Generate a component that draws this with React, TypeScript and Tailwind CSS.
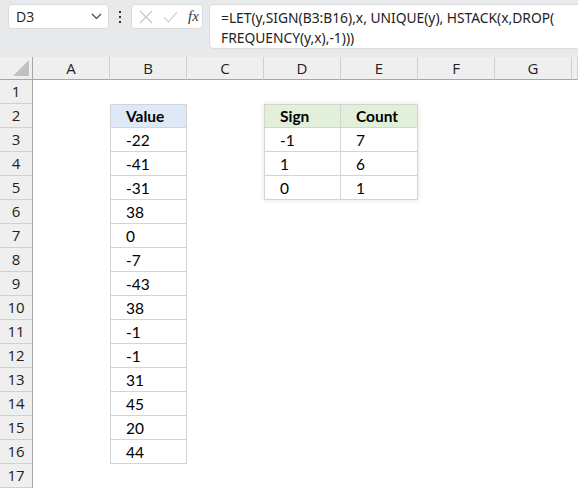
import React from "react";

const COLS = ["A", "B", "C", "D", "E", "F", "G", ""];
const VALUES = ["-22", "-41", "-31", "38", "0", "-7", "-43", "38", "-1", "-1", "31", "45", "20", "44"];
const SUMMARY = [
  ["-1", "7"],
  ["1", "6"],
  ["0", "1"],
];

function cellContent(row: number, col: number) {
  // col: 0 = A ... 6 = G
  if (col === 1 && row === 2) return { text: "Value", cls: "bg-[#dde9f5] font-bold border-t border-l border-r border-b border-[#d4d4d4]" };
  if (col === 1 && row >= 3 && row <= 16)
    return { text: VALUES[row - 3], cls: "border-l border-r border-b border-[#d4d4d4]" };
  if (col === 3 && row === 2) return { text: "Sign", cls: "bg-[#e2efda] font-bold border-t border-l border-r border-b border-[#d4d4d4]" };
  if (col === 4 && row === 2) return { text: "Count", cls: "bg-[#e2efda] font-bold border-t border-r border-b border-[#d4d4d4]" };
  if (col === 3 && row >= 3 && row <= 5)
    return { text: SUMMARY[row - 3][0], cls: "border-l border-r border-b border-[#d4d4d4]" };
  if (col === 4 && row >= 3 && row <= 5)
    return { text: SUMMARY[row - 3][1], cls: "border-r border-b border-[#d4d4d4]" };
  return { text: "", cls: "" };
}

export default function App() {
  const rows = Array.from({ length: 17 }, (_, i) => i + 1);

  return (
    <div className="w-[578px] h-[488px] overflow-hidden bg-white relative" style={{ fontFamily: "Lato, 'Liberation Sans', sans-serif" }}>
      {/* Toolbar */}
      <div className="h-[57px] bg-[#e8e9eb] flex items-start pt-[4px] pl-[8px] gap-0">
        <div className="w-[101px] h-[25px] bg-white rounded-[4px] border border-[#dcdcdc] flex items-center justify-between pl-[7px] pr-[6px]">
          <span className="text-[14px] text-[#222]" style={{ fontFamily: "'Open Sans', sans-serif" }}>D3</span>
          <svg width="11" height="7" viewBox="0 0 11 7"><path d="M1 1l4.5 4.5L10 1" fill="none" stroke="#444" strokeWidth="1.2" /></svg>
        </div>
        <div className="w-[22px] h-[25px] flex flex-col items-center justify-center gap-[3px]">
          <span className="w-[2px] h-[2px] bg-[#333]" />
          <span className="w-[2px] h-[2px] bg-[#333]" />
          <span className="w-[2px] h-[2px] bg-[#333]" />
        </div>
        <div className="w-[72px] h-[25px] bg-white rounded-[4px] border border-[#dcdcdc] flex items-center pl-[7px] gap-[10px]">
          <svg width="14" height="14" viewBox="0 0 14 14"><path d="M1 1l12 12M13 1L1 13" stroke="#c4c4c4" strokeWidth="1.1" /></svg>
          <svg width="15" height="12" viewBox="0 0 15 12"><path d="M1 6l4.5 5L14 1" fill="none" stroke="#c4c4c4" strokeWidth="1.1" /></svg>
          <span className="text-[15px] italic text-[#333] leading-none" style={{ fontFamily: "'Liberation Serif', serif" }}>fx</span>
        </div>
        <div className="ml-[6px] flex-1 h-[45px] bg-white rounded-tl-[5px] rounded-bl-[5px] border border-[#dcdcdc] border-r-0 pl-[11px] pt-[3px]">
          <div className="text-[13.8px] leading-[20px] text-[#222]" style={{ fontFamily: "'Noto Sans', sans-serif" }}>
            <div>=LET(y,SIGN(B3:B16),x, UNIQUE(y), HSTACK(x,DROP(</div>
            <div>FREQUENCY(y,x),-1)))</div>
          </div>
        </div>
      </div>

      {/* Grid */}
      <div className="grid grid-cols-[33px_repeat(7,77px)_6px] grid-rows-[23px_repeat(17,24px)]">
        {/* Header row */}
        <div className="bg-[#efefef] border-r border-b border-[#a6a6a6] relative">
          <svg className="absolute right-[3px] bottom-[3px]" width="16" height="16" viewBox="0 0 16 16"><path d="M16 0V16H0Z" fill="#c0c0c0" /></svg>
        </div>
        {COLS.map((c, i) => (
          <div
            key={i}
            className="bg-[#efefef] border-b border-[#a6a6a6] border-r border-r-[#d0d0d0] flex items-center justify-center text-[15px] text-[#222]"
            style={{ fontFamily: "'Open Sans', sans-serif" }}
          >
            {c}
          </div>
        ))}
        {rows.map((r) => (
          <React.Fragment key={r}>
            <div
              className="bg-[#efefef] border-r border-r-[#a6a6a6] border-b border-b-[#d0d0d0] flex items-center justify-center text-[15px] text-[#222]"
              style={{ fontFamily: "'Open Sans', sans-serif" }}
            >
              {r}
            </div>
            {COLS.map((_, ci) => {
              const { text, cls } = cellContent(r, ci);
              return (
                <div key={ci} className={`flex items-center pt-[2px] pl-[15px] text-[15.5px] text-black ${cls}`}>
                  {text}
                </div>
              );
            })}
          </React.Fragment>
        ))}
      </div>

      {/* soft shadow round the summary table */}
      <div className="absolute left-[264px] top-[104px] w-[154px] h-[96px] shadow-[0_0_5px_rgba(0,0,0,0.12)] pointer-events-none" />
    </div>
  );
}
